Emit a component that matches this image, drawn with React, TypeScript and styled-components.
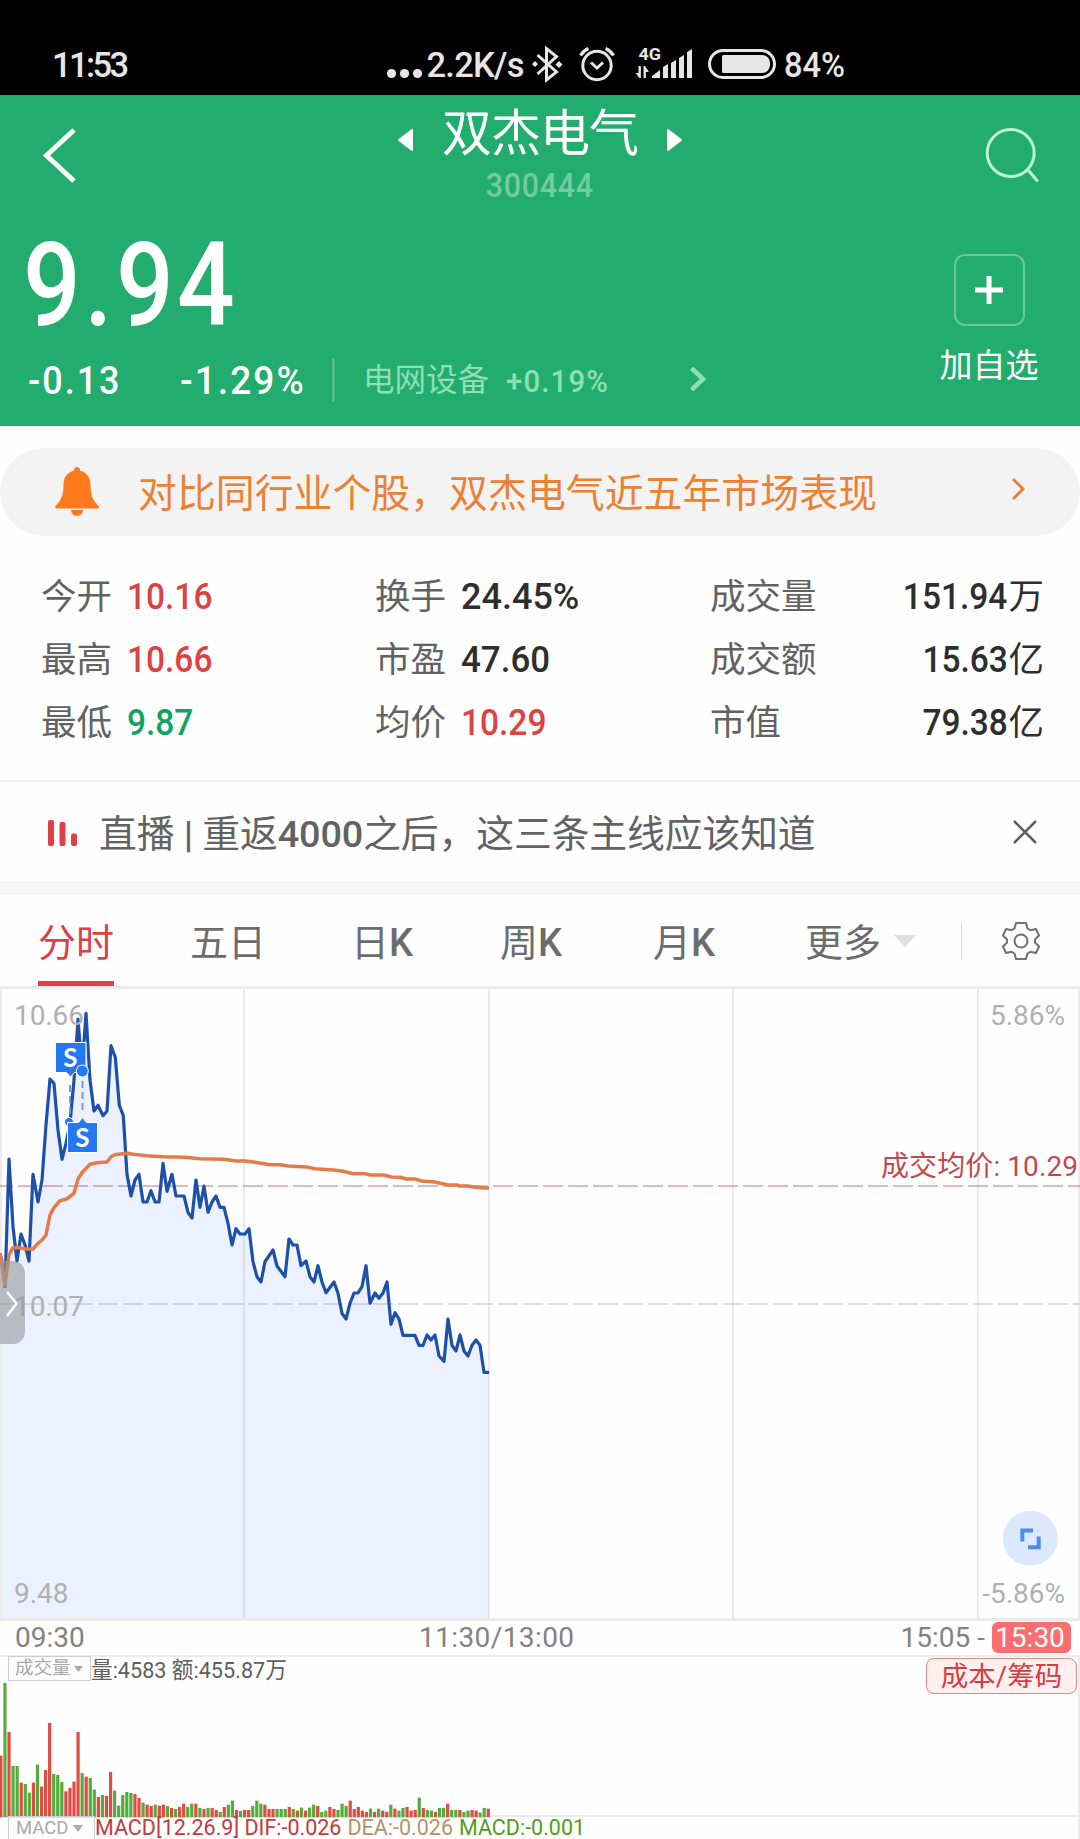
import React from "react";
import styled, { createGlobalStyle } from "styled-components";

const GlobalStyle = createGlobalStyle`
  * { box-sizing: border-box; }
  html, body { margin: 0; padding: 0; background: #fefefe; }
  body { width: 1080px; height: 1839px; overflow: hidden; font-family: Roboto, "Noto Sans CJK SC", sans-serif; }
  svg { display: block; flex: none; }
`;

const RED = "#dc4242";
const GREEN = "#12a362";
const DARK = "#2e2e2e";

const Screen = styled.main`
  width: 1080px;
  height: 1839px;
  overflow: hidden;
  display: flex;
  flex-direction: column;
`;

/* text run with adjustable size, weight, tracking and horizontal squeeze */
const Label = styled.span<{
  $size: number;
  $weight?: number;
  $track?: number;
  $color?: string;
  $squeeze?: number;
  $origin?: string;
}>`
  display: inline-block;
  white-space: pre;
  font-size: ${(p) => p.$size}px;
  font-weight: ${(p) => p.$weight ?? 400};
  letter-spacing: ${(p) => p.$track ?? 0}px;
  color: ${(p) => p.$color ?? "inherit"};
  line-height: 1.2;
  transform: scaleX(${(p) => p.$squeeze ?? 1});
  transform-origin: ${(p) => p.$origin ?? "left"} center;
`;
const Medium = styled.span`
  font-weight: 500;
`;

/* ---------- status bar ---------- */
const StatusBar = styled.div`
  height: 95px;
  background: #000;
  color: #e6e6e6;
  display: flex;
  align-items: flex-start;
  padding: 44px 0 0 52px;
`;
const StatusTime = styled.div`
  width: 334px;
  padding-top: 1px;
`;

/* ---------- header ---------- */
const Header = styled.header`
  height: 331px;
  background: #22ac6e;
  color: #fff;
  display: flex;
  flex-direction: column;
`;
const TitleBar = styled.div`
  height: 115px;
  display: grid;
  grid-template-columns: 300px 480px 300px;
`;
const BackButton = styled.div`
  padding: 32px 0 0 41px;
`;
const TitleBlock = styled.div`
  display: flex;
  flex-direction: column;
  align-items: center;
`;
const TitleLine = styled.div`
  display: flex;
  align-items: center;
  justify-content: center;
  gap: 28px;
  height: 70px;
  padding-top: 8px;
  svg { margin-top: 12px; }
`;
const CodeLine = styled.div`
  height: 40px;
  line-height: 40px;
  margin-top: 1px;
`;
const SearchButton = styled.div`
  padding: 31px 0 0 204px;
`;
const QuoteArea = styled.div`
  display: flex;
  justify-content: space-between;
  flex: 1;
`;
const QuoteMain = styled.div`
  width: 780px;
  display: flex;
  flex-direction: column;
`;
const PriceLine = styled.div`
  height: 146px;
  padding: 6px 0 0 23px;
`;
const ChangeLine = styled.div`
  display: flex;
  align-items: center;
  height: 48px;
  padding-left: 28px;
`;
const ChangeCell = styled.div<{ $w: number }>`
  width: ${(p) => p.$w}px;
  padding-top: 2px;
`;
const Rule = styled.i<{ $h: number; $w: number; $c: string }>`
  display: block;
  width: ${(p) => p.$w}px;
  height: ${(p) => p.$h}px;
  background: ${(p) => p.$c};
`;
const AddBlock = styled.div`
  width: 182px;
  display: flex;
  flex-direction: column;
  align-items: center;
  padding-top: 44px;
`;
const AddBox = styled.div`
  width: 71px;
  height: 72px;
  border: 2px solid #69c89a;
  border-radius: 11px;
  display: flex;
  align-items: center;
  justify-content: center;
  margin-bottom: 20px;
`;

/* ---------- banner ---------- */
const Banner = styled.div`
  height: 88px;
  margin-top: 22px;
  border-radius: 44px;
  background: #f3f3f3;
  display: flex;
  align-items: center;
  padding-left: 54px;
`;
const BannerText = styled.div`
  width: 873px;
  margin-left: 38px;
  padding-top: 4px;
  color: #ea8133;
`;
const BannerArrow = styled.div`
  padding-bottom: 4px;
`;

/* ---------- statistics ---------- */
const Stats = styled.section`
  height: 246px;
  border-bottom: 2px solid #efefef;
  padding: 30px 36px 0 41px;
  display: grid;
  grid-template-columns: 334px 335px 1fr;
  grid-auto-rows: 63px;
`;
const StatCell = styled.div<{ $spread?: boolean }>`
  display: flex;
  align-items: center;
  justify-content: ${(p) => (p.$spread ? "space-between" : "flex-start")};
  gap: 15px;
`;
const StatAmount = styled.div`
  display: flex;
  align-items: center;
  gap: 1px;
`;

/* ---------- live row ---------- */
const LiveRow = styled.div`
  height: 99px;
  display: flex;
  align-items: center;
  padding: 3px 0 0 48px;
  color: #626262;
`;
const LiveText = styled.div`
  width: 913px;
  margin-left: 20px;
  padding-top: 4px;
`;
const Band = styled.div`
  height: 14px;
  background: #f7f7f7;
`;

/* ---------- tabs ---------- */
const Tabs = styled.nav`
  height: 91px;
  display: flex;
  align-items: flex-start;
  padding-left: 38px;
  color: #6c6c6c;
`;
const Tab = styled.div<{ $w: number; $active?: boolean }>`
  width: ${(p) => p.$w}px;
  height: 91px;
  padding-top: 26px;
  color: ${(p) => (p.$active ? "#da4048" : "inherit")};
`;
const TabInner = styled.div<{ $active?: boolean }>`
  display: inline-block;
  height: 65px;
  border-bottom: ${(p) => (p.$active ? "5px solid #e14048" : "0")};
`;
const TabTools = styled.div`
  display: flex;
  align-items: center;
  height: 91px;
  padding-top: 1px;
`;
const Spacer = styled.div<{ $w: number }>`
  width: ${(p) => p.$w}px;
`;

/* ---------- chart ---------- */
const ChartPanel = styled.section`
  height: 635px;
`;
const TimeAxis = styled.div`
  height: 36px;
  border-bottom: 2px solid #ebebeb;
  color: #828282;
  display: grid;
  grid-template-columns: 404px 250px 1fr;
  align-items: center;
  padding: 0 9px 0 15px;
  font-size: 28px;
  line-height: 32px;
`;
const AxisEnd = styled.div`
  display: flex;
  justify-content: flex-end;
  gap: 7px;
`;
const TimePill = styled.span`
  width: 79px;
  height: 31px;
  line-height: 31px;
  border-radius: 6px;
  background: #fb6d6f;
  color: #fff;
  text-align: center;
  padding-right: 3px;
`;
const VolumeHead = styled.div`
  height: 38px;
  display: flex;
  align-items: flex-start;
  padding: 0 3px 0 8px;
`;
const Chip = styled.div<{ $w: number; $h: number }>`
  width: ${(p) => p.$w}px;
  height: ${(p) => p.$h}px;
  margin-top: -1px;
  border: 1px solid #cfcfcf;
  color: #a8a8a8;
  display: flex;
  align-items: center;
  gap: 3px;
  padding-left: 6px;
`;
const VolumeText = styled.div`
  flex: 1;
  color: #5f5f5f;
`;
const CostTag = styled.div`
  width: 151px;
  height: 36px;
  margin-top: 1px;
  border: 1px solid #d98a8a;
  border-radius: 8px;
  background: #ffefee;
  display: flex;
  align-items: center;
  justify-content: center;
`;
const VolumePlot = styled.div`
  height: 122px;
`;
const MacdRow = styled.div`
  height: 22px;
  display: flex;
  padding-left: 8px;
  span { line-height: 21px; }
`;
const MacdChip = styled(Chip)`
  padding-left: 7px;
  gap: 5px;
  border-bottom: 0;
`;
const MacdTexts = styled.div`
  display: flex;
  gap: 6px;
`;

/* price polyline: chart-space points */
const PRICE_A = [
  [0, 820], [5, 840], [15, 920], [27, 537], [39, 740], [51, 843], [63, 762], [75, 795], [87, 843], [99, 583], [114, 666],
  [126, 600], [138, 435], [150, 297], [162, 310], [174, 450], [186, 538], [198, 490], [210, 430], [222, 300], [234, 118],
  [246, 270], [258, 100], [270, 300], [282, 393], [294, 376], [309, 407], [321, 393], [333, 197], [346, 232], [358, 376],
  [370, 407], [381, 583], [393, 648], [405, 600], [417, 583], [429, 666], [441, 666], [453, 632], [465, 666], [477, 666],
  [489, 550], [501, 634], [516, 583], [528, 648], [552, 648], [564, 697], [576, 714], [588, 600], [600, 682], [612, 618],
  [624, 697], [636, 666], [648, 648], [660, 682], [672, 682], [684, 730], [696, 795], [708, 746],
].map(([x, y]) => [x / 3, y / 3 + 980]);
const PRICE_B = [
  [0, 402], [15, 402], [27, 386], [39, 485], [51, 530], [63, 546], [75, 485], [99, 450], [111, 498], [135, 530], [147, 417],
  [159, 435], [171, 435], [183, 497], [198, 483], [210, 530], [222, 546], [234, 497], [246, 546], [258, 578], [282, 546],
  [294, 580], [306, 640], [318, 657], [330, 610], [342, 579], [354, 579], [366, 560], [378, 497], [390, 610], [405, 579],
  [417, 595], [429, 579], [441, 546], [453, 673], [465, 638], [477, 657], [489, 706], [525, 706], [537, 736], [549, 736],
  [561, 705], [573, 720], [585, 705], [597, 768], [612, 784], [624, 657], [636, 736], [648, 753], [660, 705], [672, 753],
  [684, 768], [696, 736], [708, 720], [720, 736], [732, 817], [747, 817],
].map(([x, y]) => [x / 3 + 240, y / 3 + 1100]);
const AVG_A = [
  [0, 820], [15, 915], [27, 825], [39, 803], [60, 803], [75, 807], [99, 807], [114, 790], [126, 780], [138, 765], [150, 705],
  [162, 683], [180, 662], [200, 657], [222, 640], [234, 597], [246, 578], [270, 553], [290, 548], [321, 546], [333, 530],
  [345, 524], [381, 520], [400, 523], [440, 527], [490, 530], [555, 532], [600, 536], [670, 538], [710, 543],
].map(([x, y]) => [x / 3, y / 3 + 980]);
const AVG_B = [
  [15, 183], [45, 187], [90, 194], [120, 194], [145, 198], [200, 201], [225, 206], [280, 210], [310, 214], [340, 221],
  [375, 221], [390, 225], [430, 225], [455, 231], [480, 232], [500, 237], [525, 237], [545, 243], [585, 246], [625, 255],
  [650, 255], [660, 258], [685, 258], [700, 261], [735, 264], [747, 264],
].map(([x, y]) => [x / 3 + 240, y / 3 + 1100]);
const toPoints = (list: number[][]) => list.map(([x, y]) => `${x.toFixed(1)},${y.toFixed(1)}`).join(" ");
const PRICE = toPoints([...PRICE_A, ...PRICE_B]);
const AVG = toPoints([...AVG_A, ...AVG_B]);

/* volume bars: one per minute, r = up, g = down, number = height */
const VOLUMES =
  "r185 g403 r256 g154 g154 r104 g100 g74 r104 g158 r92 r142 r283 g130 g127 g106 r78 r88 r107 r256 g133 r122 g118 g83 r61 g67 r64 r136 g80 g35 g67 g76 g73 r70 r58 g44 r38 r34 g38 r35 r38 g34 r28 g25 r31 r41 g31 g41 r41 g28 r25 g28 r28 r22 g16 r31 g38 g50 r22 g19 r22 r22 g34 g50 g41 r38 r25 r25 g25 g25 g25 r31 g25 r20 g29 r20 g29 g38 r34 g16 g20 r31 r25 g22 g41 g34 r50 r25 r31 r20 r16 g26 r16 g26 r20 r16 g38 r26 g20 g28 r31 r20 r22 g59 r28 g22 g20 r16 g28 g28 r41 g22 g22 r22 g16 g20 r22 r20 g14 g28 r26"
    .split(" ")
    .map((v) => ({ up: v[0] === "r", h: Number(v.slice(1)) / 3 }));
const BAR_STEP = 487.4 / (VOLUMES.length - 1);

function StatusGlyphs() {
  return (
    <svg width="470" height="46" viewBox="386 44 470 46" fill="none" stroke="#e6e6e6">
      <g fill="#e6e6e6" stroke="none">
        <circle cx="391.5" cy="73.5" r="4.6" />
        <circle cx="404.5" cy="73.5" r="4.6" />
        <circle cx="417.5" cy="73.5" r="4.6" />
        <text x="426.5" y="76.5" fontSize="34.5" fontWeight="500" textLength="98">2.2K/s</text>
        <text x="638.5" y="60" fontSize="16.5" fontWeight="700" textLength="22.5" lengthAdjust="spacingAndGlyphs">4G</text>
        <text x="784" y="76.5" fontSize="34.5" fontWeight="500" textLength="61" lengthAdjust="spacingAndGlyphs">84%</text>
        <path d="M652 78 v-2 l8 -6 v8z M663 78 v-11 l5 -3 v14z M671 78 v-15 l5 -3 v18z M679 78 v-20 l5 -3 v23z M687 78 v-26 l5 -3 v29z" />
        <path d="M635.5 73h3v-7h2.4v12h-1.5z M643.5 66h1.5l4 6h-3.1v6h-2.4z" />
        <rect x="722" y="55" width="48" height="18" rx="8" />
        <rect x="722" y="55" width="14" height="18" rx="1.5" />
        <path d="M535 61l3 3-3 3-3-3z M559 61l3.5 3.500-3.500 3.500-3.500-3.500z" />
      </g>
      <path d="M537.500 55 L556.500 72 L546.500 80 V48.500 L556.500 56.500 L537.500 74" strokeWidth="3" />
      <circle cx="597" cy="65.500" r="14.200" strokeWidth="3" />
      <path d="M591 62.500 l6 5.500 l6-5.500" strokeWidth="3" />
      <path d="M580.500 55.500 q3-5 8-7 M613.500 55.500 q-3-5-8-7" strokeWidth="3.200" />
      <rect x="709.500" y="50.500" width="65" height="27" rx="13.500" strokeWidth="3" />
    </svg>
  );
}

function Chart() {
  const grid = "#ebebeb";
  return (
    <svg width="1080" height="635" viewBox="0 986 1080 635">
      <polygon points={`0,1619 ${PRICE} 489,1619`} fill="#ebf1fe" />
      <g fill="none" stroke={grid} strokeWidth="2">
        <path d="M1 986V1621 M1079 986V1621" />
        <path d="M733 987V1620 M978 987V1620" />
        <path d="M0 987.500H1080 M0 1619.500H1080" strokeWidth="3" />
      </g>
      <path d="M244 989V1618 M489 989V1618" stroke="#5a6478" strokeOpacity=".13" strokeWidth="2" />
      <path d="M-2 1304H1080" stroke="#9a9ca4" strokeOpacity=".32" strokeWidth="2" strokeDasharray="20 5" />
      <path d="M-7 1186H1080" stroke="#b03c44" strokeOpacity=".36" strokeWidth="2" strokeDasharray="20 5" />
      <polyline points={PRICE} fill="none" stroke="#1d50a8" strokeWidth="3.200" strokeLinejoin="round" />
      <polyline points={AVG} fill="none" stroke="#e47b48" strokeWidth="3.500" strokeLinejoin="round" />

      <g fontSize="28" fill="#b0b0b0">
        <text x="14" y="1025" textLength="70">10.66</text>
        <text x="14" y="1316" textLength="70">10.07</text>
        <text x="14" y="1603">9.48</text>
        <text x="1065" y="1025" textAnchor="end">5.86%</text>
        <text x="1065" y="1603" textAnchor="end">-5.86%</text>
      </g>
      <text x="881" y="1176" fontSize="28" fill="#c44850" textLength="197">成交均价: 10.29</text>

      <g stroke="#6b9ce8" strokeWidth="2" strokeDasharray="7 4">
        <path d="M70 1085V1120 M82.500 1081V1112" />
      </g>
      <circle cx="69" cy="1122" r="4.500" fill="#2479f2" stroke="#fff" />
      <path d="M55.500 1042.500H86V1072.500H74.500L70.500 1077L66.500 1072.500H55.500Z" fill="#2479f2" stroke="#fff" />
      <path d="M67.500 1122.500H78.500L82.500 1117.500L86.500 1122.500H97.500V1152.500H67.500Z" fill="#2479f2" stroke="#fff" />
      <circle cx="82.300" cy="1071" r="6" fill="#2479f2" stroke="#fff" />
      <g fontSize="26" fontWeight="700" fill="#fff" textAnchor="middle" fontFamily="Lato, sans-serif">
        <text x="70.500" y="1067">S</text>
        <text x="82.500" y="1147">S</text>
      </g>

      <path d="M0 1261H13a12 12 0 0 1 12 12V1332a12 12 0 0 1-12 12H0Z" fill="#96979b" fillOpacity=".6" />
      <path d="M7 1292L16.500 1303.500L7 1316" fill="none" stroke="#fff" strokeWidth="2.500" />

      <circle cx="1030.300" cy="1538.300" r="27.500" fill="#dce8fc" />
      <path d="M1033 1530.500H1022.300V1541.500 M1028 1547.300H1038.700V1536.500" fill="none" stroke="#4f8cea" strokeWidth="4" />
    </svg>
  );
}

function VolumeBars() {
  return (
    <svg width="1080" height="122" viewBox="0 1695 1080 122" overflow="visible">
      <path d="M0 1816H1080 M1079 1657V1839" stroke="#ebebeb" strokeWidth="2" />
      {VOLUMES.map((v, i) => (
        <rect key={i} x={i * BAR_STEP - 0.7} y={1817.300 - v.h} width="3.200" height={v.h} fill={v.up ? "#e04b44" : "#55ac3a"} />
      ))}
    </svg>
  );
}

type Stat = { name: string; value: string; color: string; unit?: string; squeeze?: number };
const STATS: Stat[] = [
  { name: "今开", value: "10.16", color: RED },
  { name: "换手", value: "24.45%", color: DARK, squeeze: 1 },
  { name: "成交量", value: "151.94", color: DARK, unit: "万" },
  { name: "最高", value: "10.66", color: RED },
  { name: "市盈", value: "47.60", color: DARK, squeeze: 0.97 },
  { name: "成交额", value: "15.63", color: DARK, unit: "亿" },
  { name: "最低", value: "9.87", color: GREEN },
  { name: "均价", value: "10.29", color: RED },
  { name: "市值", value: "79.38", color: DARK, unit: "亿" },
];

export default function App() {
  return (
    <Screen>
      <GlobalStyle />
      <StatusBar>
        <StatusTime>
          <Label $size={34.5} $weight={500} $track={-2.6}>11:53</Label>
        </StatusTime>
        <StatusGlyphs />
      </StatusBar>

      <Header>
        <TitleBar>
          <BackButton>
            <svg width="36" height="56" viewBox="0 0 36 56" fill="none" stroke="#fff" strokeWidth="5">
              <path d="M33 3L5.500 28.500L33 54" />
            </svg>
          </BackButton>
          <TitleBlock>
            <TitleLine>
              <svg width="16" height="22" viewBox="0 0 16 22"><path d="M1 11L14 1V21Z" fill="#fff" stroke="#fff" strokeWidth="2" strokeLinejoin="round" /></svg>
              <Label $size={50} $track={-1}>双杰电气</Label>
              <svg width="16" height="22" viewBox="0 0 16 22"><path d="M15 11L2 1V21Z" fill="#fff" stroke="#fff" strokeWidth="2" strokeLinejoin="round" /></svg>
            </TitleLine>
            <CodeLine>
              <Label $size={33} $track={0.8} $weight={500} $squeeze={0.92} $origin="center" $color="#73cca1">300444</Label>
            </CodeLine>
          </TitleBlock>
          <SearchButton>
            <svg width="58" height="60" viewBox="0 0 58 60" fill="none" stroke="#b9f5d6" strokeWidth="3">
              <circle cx="26.700" cy="27" r="23.500" />
              <path d="M45 45L53 54.500" strokeLinecap="round" />
            </svg>
          </SearchButton>
        </TitleBar>
        <QuoteArea>
          <QuoteMain>
            <PriceLine>
              <Label $size={116} $weight={500} $track={4} $squeeze={0.875}>9.94</Label>
            </PriceLine>
            <ChangeLine>
              <ChangeCell $w={152}><Label $size={39} $track={2.2} $weight={500} $squeeze={0.92}>-0.13</Label></ChangeCell>
              <ChangeCell $w={152}><Label $size={39} $track={2.2} $weight={500} $squeeze={0.95}>-1.29%</Label></ChangeCell>
              <Rule $w={3} $h={44} $c="#4fbd8b" />
              <Spacer $w={28} />
              <ChangeCell $w={143}><Label $size={31.5} $color="#8fdfb6">电网设备</Label></ChangeCell>
              <ChangeCell $w={184}><Label $size={32} $weight={500} $track={1.2} $color="#8fdfb6" $squeeze={0.92}>+0.19%</Label></ChangeCell>
              <svg width="18" height="26" viewBox="0 0 18 26" fill="none" stroke="#8fdfb6" strokeWidth="4.500">
                <path d="M3 2.500L13 12L3 21.500" strokeLinecap="round" />
              </svg>
            </ChangeLine>
          </QuoteMain>
          <AddBlock>
            <AddBox>
              <svg width="28" height="28" viewBox="0 0 28 28" stroke="#fff" strokeWidth="5"><path d="M14 0V28 M0 14H28" /></svg>
            </AddBox>
            <Label $size={33}>加自选</Label>
          </AddBlock>
        </QuoteArea>
      </Header>

      <Banner>
        <svg width="46" height="52" viewBox="0 0 46 52" fill="#ff7a1c">
          <path d="M23 1a3 3 0 0 1 3 3.500c7 2 10.500 7 10.500 14 0 12 3 16 8 21.500.8 1.200.3 2.500-1 2.500H2.500c-1.300 0-1.800-1.300-1-2.500 5-5.500 8-9.500 8-21.500 0-7 3.500-12 10.500-14A3 3 0 0 1 23 1z" />
          <path d="M17 44h12a6 6 0 0 1-12 0z" />
        </svg>
        <BannerText><Label $size={38.9}>对比同行业个股，双杰电气近五年市场表现</Label></BannerText>
        <BannerArrow>
          <svg width="16" height="26" viewBox="0 0 16 26" fill="none" stroke="#ee803c" strokeWidth="3"><path d="M2 2L12 12L2 22" /></svg>
        </BannerArrow>
      </Banner>

      <Stats>
        {STATS.map((s) => (
          <StatCell key={s.name} $spread={!!s.unit}>
            <Label $size={35.5} $color="#626262">{s.name}</Label>
            {s.unit ? (
              <StatAmount>
                <Label $size={36} $weight={500} $squeeze={0.93} $origin="right" $color={s.color}>{s.value}</Label>
                <Label $size={35.5} $color={s.color}>{s.unit}</Label>
              </StatAmount>
            ) : (
              <Label $size={36} $weight={500} $squeeze={s.squeeze ?? 0.93} $color={s.color}>{s.value}</Label>
            )}
          </StatCell>
        ))}
      </Stats>

      <LiveRow>
        <svg width="31" height="26" viewBox="0 0 31 26" fill="#e33e48">
          <rect x="0" y="0" width="6" height="26" rx="2" />
          <rect x="11.500" y="2" width="6" height="24" rx="2" />
          <rect x="23" y="13.500" width="6" height="12.500" rx="2" />
        </svg>
        <LiveText>
          <Label $size={37.8} $track={-0.1}>直播 <Medium>|</Medium> 重返<Medium>4000</Medium>之后，这三条主线应该知道</Label>
        </LiveText>
        <svg width="26" height="26" viewBox="0 0 26 26" stroke="#5c5c62" strokeWidth="2.500"><path d="M2 1L24 23 M24 1L2 23" /></svg>
      </LiveRow>
      <Band />

      <Tabs>
        <Tab $w={152} $active><TabInner $active><Label $size={38}>分时</Label></TabInner></Tab>
        <Tab $w={161}><TabInner><Label $size={38}>五日</Label></TabInner></Tab>
        <Tab $w={149}><TabInner><Label $size={38}>日<Medium>K</Medium></Label></TabInner></Tab>
        <Tab $w={153}><TabInner><Label $size={38}>周<Medium>K</Medium></Label></TabInner></Tab>
        <Tab $w={152}><TabInner><Label $size={38}>月<Medium>K</Medium></Label></TabInner></Tab>
        <Tab $w={89}><TabInner><Label $size={38}>更多</Label></TabInner></Tab>
        <TabTools>
          <svg width="22" height="12" viewBox="0 0 22 12"><path d="M0 0H22L11 12Z" fill="#dddfe6" /></svg>
          <Spacer $w={45} />
          <Rule $w={1} $h={36} $c="#d8d8dc" />
          <Spacer $w={40} />
          <svg width="38" height="38" viewBox="-19 -19 38 38" fill="none" stroke="#707070" strokeWidth="2" strokeLinejoin="round">
            <path d="M-5 -18H5L6.500 -12.500L9.500 -10.800L15 -12L18 -5.500L14 -1.500V1.500L18 5.500L15 12L9.500 10.800L6.500 12.500L5 18H-5L-6.500 12.500L-9.500 10.800L-15 12L-18 5.500L-14 1.500V-1.500L-18 -5.500L-15 -12L-9.500 -10.800L-6.500 -12.500Z" />
            <circle r="6.500" />
          </svg>
        </TabTools>
      </Tabs>

      <ChartPanel><Chart /></ChartPanel>

      <TimeAxis>
        <span>09:30</span>
        <Label $size={28} $track={0.4}>11:30/13:00</Label>
        <AxisEnd>
          <span>15:05 -</span>
          <TimePill>15:30</TimePill>
        </AxisEnd>
      </TimeAxis>

      <VolumeHead>
        <Chip $w={83} $h={25}>
          <Label $size={18.5}>成交量</Label>
          <svg width="9" height="6" viewBox="0 0 9 6"><path d="M0 0H9L4.500 6Z" fill="#a8a8a8" /></svg>
        </Chip>
        <VolumeText><Label $size={22.3} $squeeze={0.97}>量:4583 额:455.87万</Label></VolumeText>
        <CostTag><Label $size={27.5} $color="#d63c40">成本/筹码</Label></CostTag>
      </VolumeHead>
      <VolumePlot><VolumeBars /></VolumePlot>
      <MacdRow>
        <MacdChip $w={87} $h={23}>
          <Label $size={18.5}>MACD</Label>
          <svg width="10" height="7" viewBox="0 0 10 7"><path d="M0 0H10L5 7Z" fill="#a8a8a8" /></svg>
        </MacdChip>
        <MacdTexts>
          <Label $size={21.5} $color="#c23b40">MACD[12.26.9] DIF:-0.026</Label>
          <Label $size={21.5} $color="#b3946a">DEA:-0.026</Label>
          <Label $size={21.5} $color="#559c1c">MACD:-0.001</Label>
        </MacdTexts>
      </MacdRow>
    </Screen>
  );
}
